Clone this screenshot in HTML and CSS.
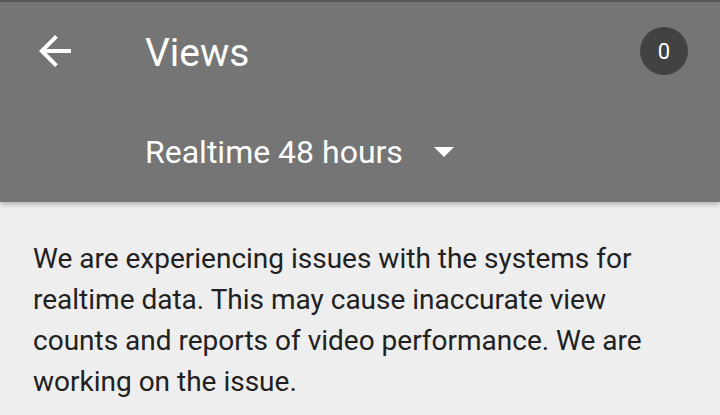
FILE: index.html
```html
<!DOCTYPE html>
<html>
<head>
<meta charset="utf-8">
<link rel="stylesheet" href="styles.css">
</head>
<body>
<header class="appbar">
  <div class="toprow">
    <svg class="back" viewBox="0 0 24 24" width="48" height="48"><path fill="#fff" d="M20 11H7.83l5.59-5.59L12 4l-8 8 8 8 1.41-1.41L7.83 13H20v-2z"/></svg>
    <h1 class="title">Views</h1>
    <span class="badge">0</span>
  </div>
  <div class="selector">
    <span class="sel-label">Realtime 48 hours</span>
    <svg class="drop" viewBox="7 10 10 5" width="20" height="10"><path fill="#fff" d="M7 10l5 5 5-5z"/></svg>
  </div>
</header>
<main class="content">
  <p class="msg">We are experiencing issues with the systems for realtime data. This may cause inaccurate view counts and reports of video performance. We are working on the issue.</p>
</main>
</body>
</html>
```
FILE: styles.css
```css
html, body {
  margin: 0;
  padding: 0;
}
body {
  width: 720px;
  height: 415px;
  overflow: hidden;
  background: #eeeeee;
  font-family: Roboto, "Noto Sans", sans-serif;
}
.appbar {
  background: #757575;
  border-top: 2px solid #555555;
  height: 200px;
  box-shadow: 0 2px 5px rgba(0,0,0,0.28);
  position: relative;
  z-index: 1;
  box-sizing: content-box;
}
.toprow {
  display: flex;
  align-items: center;
  height: 100px;
  padding-left: 31px;
  padding-right: 32px;
}
.back {
  display: block;
  flex: none;
  margin-top: -2px;
}
.title {
  margin: 0 0 0 66px;
  font-weight: 400;
  font-size: 39px;
  color: #ffffff;
  flex: 1;
  line-height: 1;
  margin-top: 2px;
}
.badge {
  width: 48px;
  height: 48px;
  border-radius: 50%;
  background: #424242;
  color: #fff;
  font-size: 22px;
  display: flex;
  align-items: center;
  justify-content: center;
  margin-top: -2px;
}
.selector {
  display: flex;
  align-items: center;
  padding-left: 145px;
  height: 100px;
  margin-top: -2px;
}
.sel-label {
  color: #fff;
  font-size: 32px;
  line-height: 1;
  margin-top: 4px;
}
.drop {
  display: block;
  margin-left: 31px;
  margin-top: 3px;
}
.content {
  padding: 36px 33px 0 33px;
}
.msg {
  margin: 0;
  color: #212121;
  font-size: 28px;
  line-height: 41px;
}
```
